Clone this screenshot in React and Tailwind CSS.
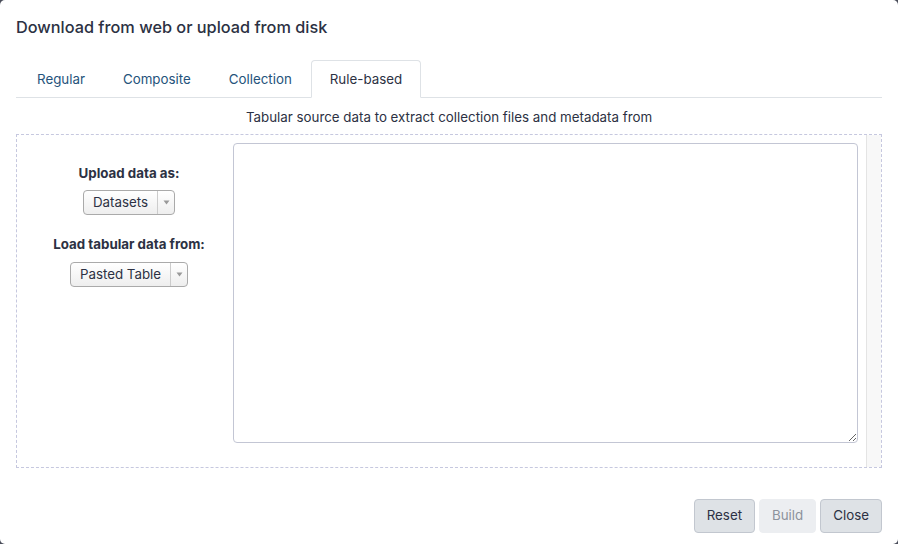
import React from 'react';

const font = { fontFamily: 'Inter, "Liberation Sans", sans-serif' };

const Select = ({ label }) => (
  <div className="flex h-[25px] items-stretch rounded-[4px] border border-[#aaaaaa] bg-gradient-to-b from-white to-[#eeeeee] text-[13.33px] text-[#2c3143]">
    <span className="flex items-center pl-[9px] pr-[9px]">{label}</span>
    <span className="flex w-[17px] items-center justify-center border-l border-[#cccccc]">
      <svg width="7" height="5" viewBox="0 0 7 5">
        <path d="M0.5 0.5 L6.5 0.5 L3.5 4.5 Z" fill="#999999" />
      </svg>
    </span>
  </div>
);

const Tab = ({ label, active }) => (
  <div
    className={
      active
        ? 'mb-[-1px] flex h-[38px] items-center rounded-t-[4px] border border-[#dee2e6] border-b-white bg-white px-[18px] pt-[2px] text-[#2c3143]'
        : 'flex h-[37px] items-center border border-transparent px-[18px] pt-[2px] text-[#25537b]'
    }
  >
    {label}
  </div>
);

export default function App() {
  return (
    <div className="h-[544px] w-[898px] bg-[#4a4d5a]" style={font}>
      <div className="flex h-full flex-col rounded-[5px] bg-white">
        <h4 className="px-4 pt-[15px] text-[16.3px] leading-[24px] font-medium text-[#2c3143]">
          Download from web or upload from disk
        </h4>

        <div className="mx-4 mt-[21px] flex items-end border-b border-[#dee2e6] pl-[2px] text-[13.33px]">
          <Tab label="Regular" />
          <Tab label="Composite" />
          <Tab label="Collection" />
          <Tab label="Rule-based" active />
        </div>

        <p className="mt-[10px] text-center text-[13.33px] leading-[18px] text-[#2c3143]">
          Tabular source data to extract collection files and metadata from
        </p>

        <div className="mx-4 mt-[8px] flex h-[334px] border border-dashed border-[#c6c8df]">
          <div className="flex w-[216px] flex-col items-center pl-[8px] pt-[29px] text-[13.33px] text-[#2c3143]">
            <div className="font-bold leading-[18px]">Upload data as:</div>
            <div className="mt-[8px]">
              <Select label="Datasets" />
            </div>
            <div className="mt-[20px] font-bold leading-[18px]">Load tabular data from:</div>
            <div className="mt-[9px]">
              <Select label="Pasted Table" />
            </div>
          </div>
          <div className="flex-1 pt-[8px] pr-[8px] pb-[24px]">
            <textarea className="block h-[300px] w-full rounded-[4px] border border-[#c3c6d4] bg-white text-[13px] outline-none" />
          </div>
          <div className="w-[15px] border-l border-[#e4e4e4] bg-[#f8f8f8]" />
        </div>

        <div className="mt-[31px] flex justify-end gap-[4px] px-4 text-[13.33px]">
          <button className="h-[34px] rounded-[4px] border border-[#c2c7cf] bg-[#dee2e6] px-[12px] text-[#2c3143]">
            Reset
          </button>
          <button className="h-[34px] rounded-[4px] border border-[#eceef1] bg-[#eceef1] px-[12px] text-[#8d929c]">
            Build
          </button>
          <button className="h-[34px] rounded-[4px] border border-[#c2c7cf] bg-[#dee2e6] px-[12px] text-[#2c3143]">
            Close
          </button>
        </div>
      </div>
    </div>
  );
}
